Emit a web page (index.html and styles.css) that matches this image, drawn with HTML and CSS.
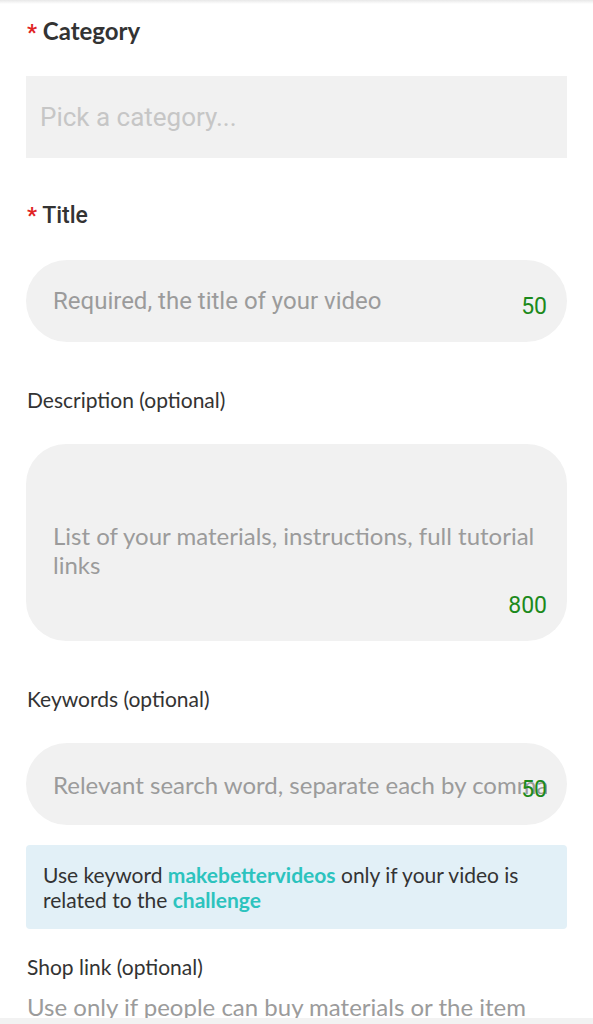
FILE: index.html
```html
<!DOCTYPE html>
<html lang="en">
<head>
    <meta charset="UTF-8">
    <meta name="viewport" content="width=device-width, initial-scale=1.0">
    <title>Upload video</title>
    <link rel="stylesheet" href="styles.css">
</head>
<body>
<div class="top-shadow"></div>
<form class="upload-form">
    <div class="field">
        <label class="field-label bold"><span class="required">*</span> Category</label>
        <div class="select-box">Pick a category...</div>
    </div>

    <div class="field">
        <label class="field-label roboto"><span class="required">*</span> Title</label>
        <div class="input-wrap">
            <input type="text" class="pill-input roboto" placeholder="Required, the title of your video">
            <span class="counter">50</span>
        </div>
    </div>

    <div class="field">
        <label class="field-label">Description (optional)</label>
        <div class="input-wrap">
            <textarea class="area-input" placeholder="List of your materials, instructions, full tutorial links"></textarea>
            <span class="counter">800</span>
        </div>
    </div>

    <div class="field keywords">
        <label class="field-label">Keywords (optional)</label>
        <div class="input-wrap">
            <input type="text" class="pill-input tight" placeholder="Relevant search word, separate each by comma">
            <span class="counter">50</span>
        </div>
        <div class="info-box">
            <p class="info-text">Use keyword <span class="highlight">makebettervideos</span> only if your video is related to the <span class="highlight">challenge</span></p>
        </div>
    </div>

    <div class="field shop">
        <label class="field-label">Shop link (optional)</label>
        <p class="hint">Use only if people can buy materials or the item</p>
    </div>
</form>
<div class="bottom-bar"></div>
</body>
</html>
```

FILE: styles.css
```css
body {
    margin: 0;
    padding: 0;
    background-color: #fff;
    font-family: Lato, "Noto Sans", sans-serif;
    color: #333;
    overflow: hidden;
    height: 1024px;
}

.top-shadow {
    height: 4px;
    background: linear-gradient(#e8e8e8, #fff);
}

.upload-form {
    padding: 11px 26px 0 26px;
}

.field {
    display: flex;
    flex-direction: column;
    margin-bottom: 43px;
}

.field-label {
    font-size: 21px;
    line-height: 30px;
    margin-bottom: 29px;
    padding-left: 1px;
}

.field-label.bold {
    font-weight: 700;
    font-size: 24px;
    line-height: 32px;
    margin-bottom: 27px;
}

.field-label.roboto {
    font-family: Roboto, sans-serif;
    font-weight: 500;
    font-size: 23px;
}

.required {
    color: #e02424;
    font-family: Roboto, sans-serif;
    font-weight: 700;
    font-size: 22px;
}

.select-box {
    height: 82px;
    box-sizing: border-box;
    background-color: #f1f1f1;
    padding: 0 14px;
    display: flex;
    align-items: center;
    font-family: Roboto, sans-serif;
    font-size: 26px;
    color: #c6c6c6;
}

.input-wrap {
    position: relative;
}

.pill-input,
.area-input {
    display: block;
    width: 100%;
    box-sizing: border-box;
    border: none;
    outline: none;
    background-color: #f1f1f1;
    font-family: Lato, "Noto Sans", sans-serif;
    font-size: 24px;
    color: #333;
}

.pill-input {
    height: 82px;
    border-radius: 41px;
    padding: 0 48px 0 27px;
}

.pill-input.tight {
    padding-right: 20px;
}

.pill-input.roboto {
    font-family: Roboto, sans-serif;
    font-size: 24px;
}

.area-input {
    height: 197px;
    border-radius: 40px;
    padding: 77px 27px 0 27px;
    line-height: 29px;
    resize: none;
}

.pill-input::placeholder,
.area-input::placeholder {
    color: #9b9b9b;
    opacity: 1;
}

.counter {
    position: absolute;
    right: 20px;
    bottom: 22px;
    font-family: Roboto, sans-serif;
    font-size: 23px;
    line-height: 26px;
    color: #1c8a1c;
}

.info-box {
    margin-top: 20px;
    background-color: #e2f0f7;
    border-radius: 4px;
    padding: 17px 17px;
}

.info-text {
    margin: 0;
    font-size: 21px;
    line-height: 25px;
    color: #333;
}

.highlight {
    color: #2cc3be;
    font-weight: 700;
}

.field.keywords {
    margin-bottom: 23px;
}

.field.shop .field-label {
    margin-bottom: 10px;
}

.hint {
    margin: 0;
    font-size: 24px;
    line-height: 30px;
    color: #9b9b9b;
    padding-left: 1px;
}

.bottom-bar {
    position: fixed;
    left: 0;
    right: 0;
    bottom: 0;
    height: 6px;
    background-color: #f2f2f2;
}
```
